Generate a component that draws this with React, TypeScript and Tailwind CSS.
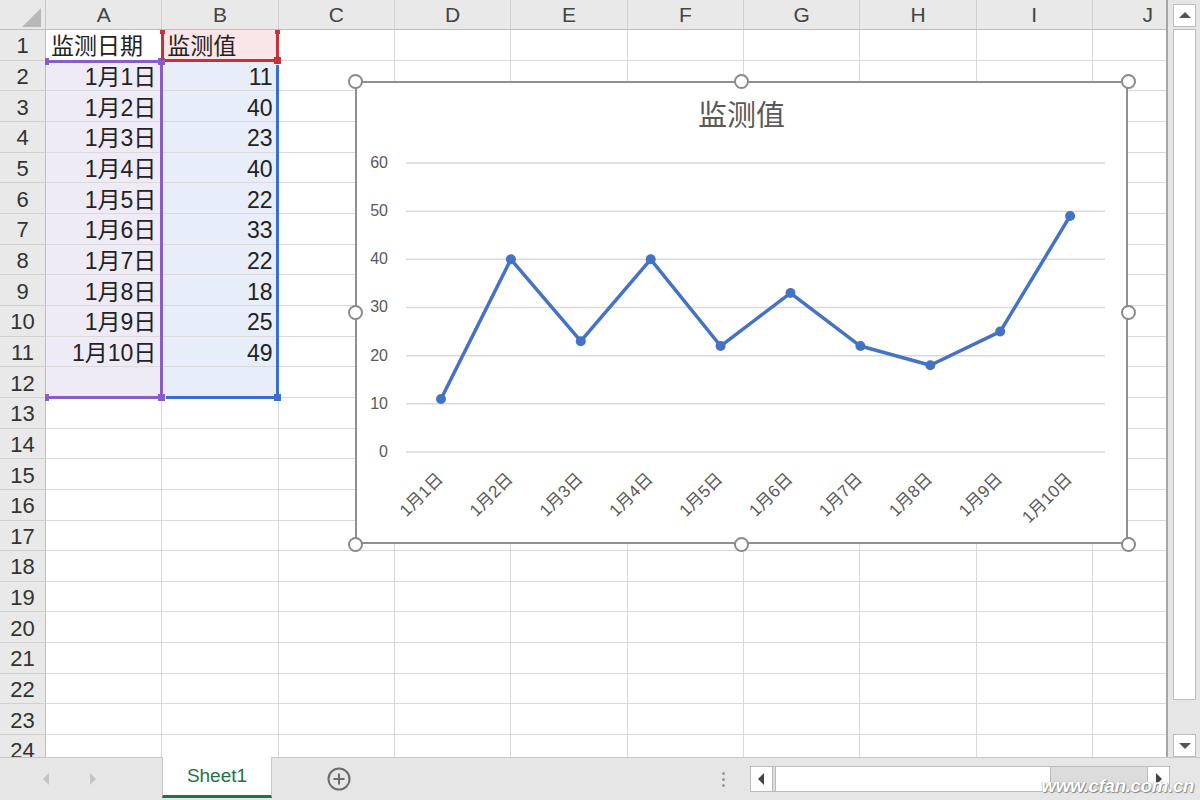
import React from 'react'

const COLS = ['A', 'B', 'C', 'D', 'E', 'F', 'G', 'H', 'I']
const dates = ['1月1日', '1月2日', '1月3日', '1月4日', '1月5日', '1月6日', '1月7日', '1月8日', '1月9日', '1月10日']
const values = [11, 40, 23, 40, 22, 33, 22, 18, 25, 49]

const font = { fontFamily: '"Liberation Sans", "Noto Sans CJK SC", sans-serif' }

// chart geometry (local to the chart box)
const plotLeft = 49
const plotRight = 748
const yZero = 369
const yStep = 48.17
const xAt = (i: number) => 84 + i * 69.9
const yAt = (v: number) => yZero - (v / 10) * yStep

const Handle = ({ cls }: { cls: string }) => (
    <div className={`absolute w-[15px] h-[15px] rounded-full bg-white border-2 border-[#8a8a8a] ${cls}`} />
)

const Chart = () => {
    const pts = values.map((v, i) => `${xAt(i)},${yAt(v)}`).join(' ')
    return (
        <div className="absolute left-[355px] top-[81px] w-[773px] h-[463px] bg-white border-2 border-[#8f8f8f]">
            <div className="absolute left-0 right-0 top-[13px] text-center text-[29px] text-[#595959] leading-[40px]">监测值</div>
            <svg className="absolute left-0 top-0" width="773" height="463">
                {[0, 10, 20, 30, 40, 50, 60].map(v => (
                    <g key={v}>
                        <line x1={plotLeft} x2={plotRight} y1={yAt(v)} y2={yAt(v)} stroke="#d9d9d9" strokeWidth="1.5" />
                        <text x="31" y={yAt(v) + 5} textAnchor="end" fontSize="16" fill="#595959">{v}</text>
                    </g>
                ))}
                <polyline points={pts} fill="none" stroke="#4472c4" strokeWidth="3.5" strokeLinejoin="round" />
                {values.map((v, i) => (
                    <circle key={i} cx={xAt(i)} cy={yAt(v)} r="5" fill="#4472c4" />
                ))}
                {dates.map((d, i) => (
                    <text key={d} x={xAt(i) + 3} y="397" textAnchor="end" fontSize="17" fill="#595959"
                        transform={`rotate(-45 ${xAt(i) + 3} 397)`}>{d}</text>
                ))}
            </svg>
        </div>
    )
}

const cellBg = (r: number, c: number) => {
    if (c === 0 && r >= 2 && r <= 12) return 'bg-[#efebf6]'
    if (c === 1 && r === 1) return 'bg-[#fbe6e7]'
    if (c === 1 && r >= 2 && r <= 12) return 'bg-[#e7eef9]'
    return 'bg-white'
}

const cellText = (r: number, c: number) => {
    if (r === 1 && c === 0) return '监测日期'
    if (r === 1 && c === 1) return '监测值'
    if (r >= 2 && r <= 11 && c === 0) return dates[r - 2]
    if (r >= 2 && r <= 11 && c === 1) return String(values[r - 2])
    return ''
}

const Selection = () => (
    <>
        {/* category range A2:A12 */}
        <div className="absolute left-[47px] top-[60px] w-[116px] h-[3px] bg-[#8a5cc8]" />
        <div className="absolute left-[160px] top-[60px] w-[3px] h-[339px] bg-[#8a5cc8]" />
        <div className="absolute left-[47px] top-[396px] w-[116px] h-[3px] bg-[#8a5cc8]" />
        <div className="absolute left-[45px] top-[58px] w-[4px] h-[7px] bg-[#8a5cc8]" />
        <div className="absolute left-[45px] top-[394px] w-[4px] h-[7px] bg-[#8a5cc8]" />
        <div className="absolute left-[158px] top-[58px] w-[7px] h-[7px] bg-[#8a5cc8]" />
        <div className="absolute left-[158px] top-[394px] w-[7px] h-[7px] bg-[#8a5cc8]" />
        {/* series name B1 */}
        <div className="absolute left-[161px] top-[31px] w-[3px] h-[29px] bg-[#c8303b]" />
        <div className="absolute left-[276px] top-[31px] w-[3px] h-[29px] bg-[#c8303b]" />
        <div className="absolute left-[165px] top-[59px] w-[112px] h-[3px] bg-[#c8303b]" />
        <div className="absolute left-[160px] top-[30px] w-[5px] h-[4px] bg-[#c8303b]" />
        <div className="absolute left-[275px] top-[30px] w-[5px] h-[4px] bg-[#c8303b]" />
        <div className="absolute left-[274px] top-[57px] w-[7px] h-[7px] bg-[#c8303b]" />
        {/* values B2:B12 */}
        <div className="absolute left-[276px] top-[65px] w-[3px] h-[332px] bg-[#3a6fd0]" />
        <div className="absolute left-[166px] top-[396px] w-[111px] h-[3px] bg-[#3a6fd0]" />
        <div className="absolute left-[274px] top-[394px] w-[7px] h-[7px] bg-[#3a6fd0]" />
    </>
)

const Tri = ({ dir, cls }: { dir: 'up' | 'down' | 'left' | 'right', cls: string }) => {
    const p = {
        up: '0,8 6,2 12,8',
        down: '0,3 6,9 12,3',
        left: '8,0 2,6 8,12',
        right: '3,0 9,6 3,12',
    }[dir]
    return (
        <svg width="12" height="12" viewBox="0 0 12 12" className={cls}>
            <polygon points={p} fill="currentColor" />
        </svg>
    )
}

const Sheet = () => (
    <div className="relative w-[1168px] h-full overflow-hidden border-r-2 border-[#a6a6a6]">
        {/* column header */}
        <div className="flex h-[30px] bg-[#e9e9e9] border-b border-[#bdbdbd]">
            <div className="w-[46px] shrink-0 border-r border-[#c8c8c8] relative">
                <svg className="absolute left-[20px] top-[8px]" width="22" height="20">
                    <polygon points="21,0 21,19 2,19" fill="#b8b8b8" />
                </svg>
            </div>
            {COLS.map(c => (
                <div key={c} className="w-[116.33px] shrink-0 border-r border-[#d0d0d0] flex items-center justify-center text-[21px] text-[#444]">{c}</div>
            ))}
            <div className="flex-1 flex items-center justify-end pr-[13px] text-[21px] text-[#444]">J</div>
        </div>
        {/* rows */}
        {Array.from({ length: 24 }, (_, i) => i + 1).map(r => (
            <div key={r} className="flex h-[30.67px]">
                <div className="w-[46px] shrink-0 bg-[#e9e9e9] border-r border-[#bdbdbd] border-b border-b-[#d0d0d0] flex items-center justify-center pt-[2px] text-[22px] text-[#333]">{r}</div>
                {COLS.map((c, ci) => (
                    <div key={c}
                        className={`w-[116.33px] shrink-0 border-r border-b border-[#dadada] flex items-center px-[5px] pt-[4px] text-[23px] text-[#222] leading-none ${cellBg(r, ci)} ${r === 1 ? 'justify-start' : 'justify-end'}`}>
                        {cellText(r, ci)}
                    </div>
                ))}
                <div className="flex-1 border-b border-[#dadada]" />
            </div>
        ))}
        <Selection />
        <Chart />
        <Handle cls="left-[348px] top-[74px]" />
        <Handle cls="left-[734px] top-[74px]" />
        <Handle cls="left-[1121px] top-[74px]" />
        <Handle cls="left-[348px] top-[305px]" />
        <Handle cls="left-[1121px] top-[305px]" />
        <Handle cls="left-[348px] top-[537px]" />
        <Handle cls="left-[734px] top-[537px]" />
        <Handle cls="left-[1121px] top-[537px]" />
    </div>
)

const VScroll = () => (
    <div className="w-[32px] h-full bg-[#e6e6e6] flex flex-col pl-[5px] pr-[4px] pt-[4px]">
        <div className="h-[23px] bg-white border border-[#bcbcbc] flex items-center justify-center text-[#555]">
            <Tri dir="up" cls="" />
        </div>
        <div className="h-[671px] mt-[2px] bg-white border border-[#bcbcbc]" />
        <div className="flex-1" />
        <div className="h-[23px] bg-white border border-[#bcbcbc] flex items-center justify-center text-[#555]">
            <Tri dir="down" cls="" />
        </div>
    </div>
)

const TabBar = () => (
    <div className="h-[43px] bg-[#e6e6e6] border-t border-[#c8c8c8] flex items-stretch relative">
        <div className="w-[162px] flex items-center text-[#c4c4c4]">
            <Tri dir="left" cls="ml-[41px]" />
            <Tri dir="right" cls="ml-[34px]" />
        </div>
        <div className="w-[110px] bg-white border-x border-[#c8c8c8] border-b-[3px] border-b-[#217346] flex items-center justify-center text-[19px] text-[#217346] mb-[2px] -mt-px">
            Sheet1
        </div>
        <div className="ml-[55px] flex items-center">
            <svg width="24" height="24" viewBox="0 0 24 24">
                <circle cx="12" cy="12" r="10.5" fill="none" stroke="#6d6d6d" strokeWidth="2" />
                <path d="M12 6.5v11M6.5 12h11" stroke="#6d6d6d" strokeWidth="2" />
            </svg>
        </div>
        <div className="ml-[371px] flex flex-col justify-center gap-[3px]">
            <div className="w-[3px] h-[3px] rounded-full bg-[#9a9a9a]" />
            <div className="w-[3px] h-[3px] rounded-full bg-[#9a9a9a]" />
            <div className="w-[3px] h-[3px] rounded-full bg-[#9a9a9a]" />
        </div>
        <div className="ml-[25px] my-[8px] w-[420px] flex border border-[#bcbcbc] bg-[#dcdcdc]">
            <div className="w-[22px] bg-white border-r border-[#bcbcbc] flex items-center justify-center text-[#444]">
                <Tri dir="left" cls="" />
            </div>
            <div className="w-[276px] ml-[2px] bg-white border-x border-[#bcbcbc]" />
            <div className="flex-1" />
            <div className="w-[22px] bg-white border-l border-[#bcbcbc] flex items-center justify-center text-[#444]">
                <Tri dir="right" cls="" />
            </div>
        </div>
        <div className="absolute right-[6px] top-[14px] text-[19px] italic font-bold tracking-tight text-white [text-shadow:0_0_1px_#777,1px_1px_1px_#888]">
            www.cfan.com.cn
        </div>
    </div>
)

export default function App() {
    return (
        <div className="w-[1200px] h-[800px] bg-white overflow-hidden flex flex-col" style={font}>
            <div className="flex h-[757px]">
                <Sheet />
                <VScroll />
            </div>
            <TabBar />
        </div>
    )
}
